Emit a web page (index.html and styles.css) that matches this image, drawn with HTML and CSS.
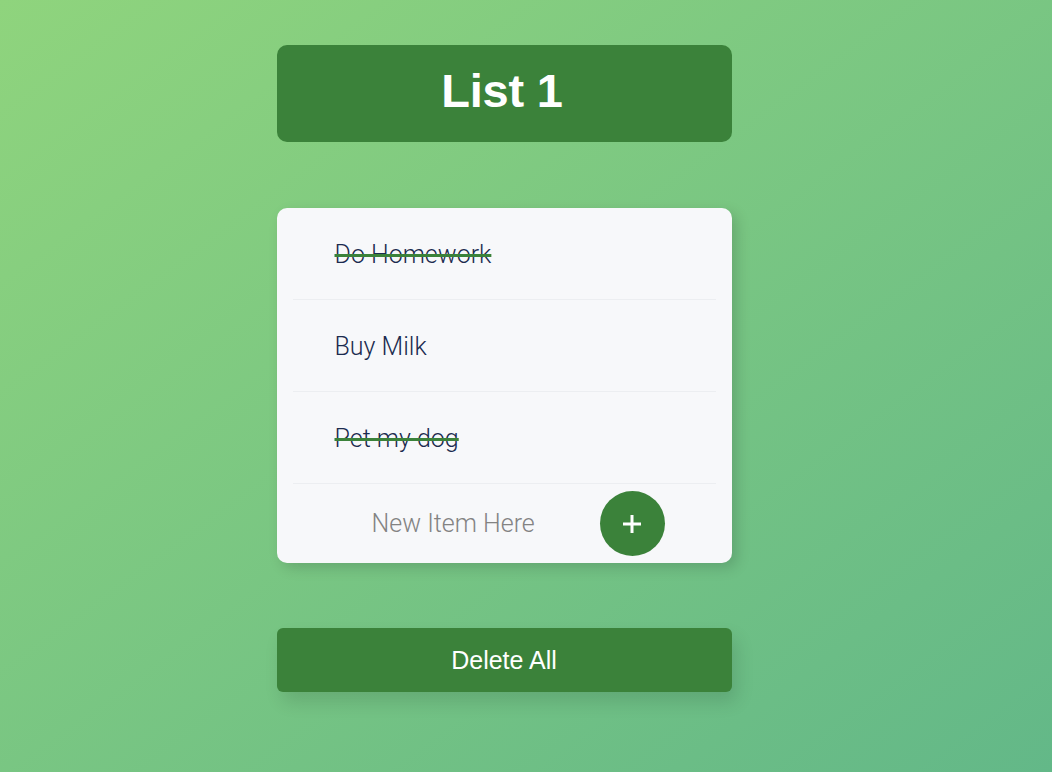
FILE: index.html
```html
<!DOCTYPE html>
<html>
<head>
<meta charset="utf-8">
<link rel="stylesheet" href="styles.css">
</head>
<body>
<main class="app">
  <header class="title-box"><h1 class="title">List 1</h1></header>
  <section class="card">
    <div class="item"><span class="item-text done">Do Homework</span></div>
    <div class="item"><span class="item-text">Buy Milk</span></div>
    <div class="item"><span class="item-text done">Pet my dog</span></div>
    <form class="new-item">
      <input class="new-input" type="text" placeholder="New Item Here">
      <button class="add-btn" type="button" aria-label="Add">
        <svg width="22" height="22" viewBox="0 0 22 22"><path d="M11 2v18M2 11h18" stroke="#fff" stroke-width="3" stroke-linecap="butt" fill="none"/></svg>
      </button>
    </form>
  </section>
  <button class="delete-btn" type="button">Delete All</button>
</main>
</body>
</html>
```
FILE: styles.css
```css
html, body {
  margin: 0;
  padding: 0;
  height: 100%;
}
body {
  background: linear-gradient(to bottom right, #8fd47d 0%, #63b888 100%);
  font-family: "Liberation Sans", Arial, sans-serif;
  min-height: 772px;
}
.app {
  width: 455px;
  margin: 0 auto;
  padding-top: 45px;
  display: flex;
  flex-direction: column;
  position: relative;
  left: -22px;
}
.title-box {
  background: #3b823a;
  border-radius: 10px;
  height: 97px;
  display: flex;
  align-items: center;
  justify-content: center;
}
.title {
  margin: 0;
  color: #fff;
  font-size: 47px;
  font-weight: 700;
  letter-spacing: -0.2px;
  position: relative;
  top: -3px;
  left: -2px;
}
.card {
  margin-top: 66px;
  background: #f7f8fa;
  border-radius: 10px;
  box-shadow: 5px 5px 14px rgba(0, 0, 0, 0.15);
  display: flex;
  flex-direction: column;
}
.item {
  margin: 0 16px;
  height: 91px;
  border-bottom: 1px solid #eceef1;
  display: flex;
  align-items: center;
  padding-left: 42px;
}
.item-text {
  font-family: "Roboto", "Liberation Sans", sans-serif;
  font-weight: 300;
  font-size: 25px;
  color: #1b2b4f;
  position: relative;
  top: 1px;
}
.item-text.done {
  text-decoration: line-through;
  text-decoration-color: #3b823a;
  text-decoration-thickness: 3px;
}
.new-item {
  margin: 0 16px;
  height: 79px;
  display: flex;
  align-items: center;
}
.new-input {
  border: none;
  background: transparent;
  outline: none;
  width: 220px;
  margin-left: 79px;
  padding: 0;
  font-family: "Roboto", "Liberation Sans", sans-serif;
  font-weight: 300;
  font-size: 25px;
  color: #1b2b4f;
}
.new-input::placeholder {
  color: #838383;
}
.add-btn {
  margin-left: 8px;
  width: 65px;
  height: 65px;
  border-radius: 50%;
  border: none;
  background: #3b823a;
  display: flex;
  align-items: center;
  justify-content: center;
  padding: 0;
  position: relative;
  top: 0;
}
.delete-btn {
  margin-top: 65px;
  height: 64px;
  border: none;
  border-radius: 6px;
  background: #3b823a;
  color: #fff;
  font-family: "Liberation Sans", Arial, sans-serif;
  font-size: 25px;
  box-shadow: 5px 10px 18px rgba(0, 0, 0, 0.12);
}
```
